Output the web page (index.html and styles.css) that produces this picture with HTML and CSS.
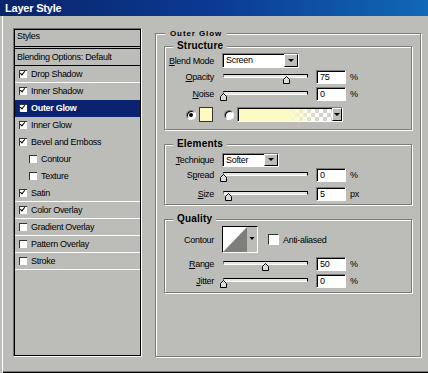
FILE: index.html
```html
<!DOCTYPE html>
<html lang="en">
<head>
  <meta charset="UTF-8" />
  <title>Layer Style</title>
  <link rel="stylesheet" href="styles.css">
</head>
<body>
  <div class="window">
    <div class="title-bar">Layer Style</div>

    <div class="dialog">
      <div class="styles-list">
        <div class="list-head">Styles</div>
        <div class="list-row blend">Blending Options: Default</div>
        <div class="list-row sep"><span class="check on"></span>Drop Shadow</div>
        <div class="list-row"><span class="check on"></span>Inner Shadow</div>
        <div class="list-row selected"><span class="check on"></span>Outer Glow</div>
        <div class="list-row"><span class="check on"></span>Inner Glow</div>
        <div class="list-row"><span class="check on"></span>Bevel and Emboss</div>
        <div class="list-row sub"><span class="check"></span>Contour</div>
        <div class="list-row sub"><span class="check"></span>Texture</div>
        <div class="list-row sep"><span class="check on"></span>Satin</div>
        <div class="list-row sep"><span class="check on"></span>Color Overlay</div>
        <div class="list-row sep"><span class="check"></span>Gradient Overlay</div>
        <div class="list-row sep"><span class="check"></span>Pattern Overlay</div>
        <div class="list-row sep"><span class="check"></span>Stroke</div>
      </div>

      <div class="group glow">
        <span class="group-title small">Outer Glow</span>

        <div class="group sub-group structure">
          <span class="group-title">Structure</span>
          <div class="row first">
            <label><u>B</u>lend Mode</label>
            <div class="select blend-select">
              <span class="select-text">Screen</span>
              <span class="select-btn"></span>
            </div>
          </div>
          <div class="row opacity-row">
            <label><u>O</u>pacity</label>
            <div class="slider">
              <div class="track"></div>
              <svg class="thumb" style="left: 61px" width="7" height="8" viewBox="0 0 7 8"><polygon points="3.5,0.5 6.5,3.5 6.5,7.5 0.5,7.5 0.5,3.5" fill="#dcddd9" stroke="#000"/></svg>
            </div>
            <div class="field">75</div>
            <span class="unit">%</span>
          </div>
          <div class="row noise-row">
            <label><u>N</u>oise</label>
            <div class="slider">
              <div class="track"></div>
              <svg class="thumb" style="left: -2px" width="7" height="8" viewBox="0 0 7 8"><polygon points="3.5,0.5 6.5,3.5 6.5,7.5 0.5,7.5 0.5,3.5" fill="#dcddd9" stroke="#000"/></svg>
            </div>
            <div class="field">0</div>
            <span class="unit">%</span>
          </div>
          <div class="swatch-row">
            <span class="radio on"></span>
            <span class="color-swatch"></span>
            <span class="radio second"></span>
            <div class="gradient">
              <span class="gradient-fill"></span>
              <span class="select-btn narrow"></span>
            </div>
          </div>
        </div>

        <div class="group sub-group elements">
          <span class="group-title">Elements</span>
          <div class="row first">
            <label><u>T</u>echnique</label>
            <div class="select technique-select">
              <span class="select-text">Softer</span>
              <span class="select-btn"></span>
            </div>
          </div>
          <div class="row spread-row">
            <label>S<u>p</u>read</label>
            <div class="slider">
              <div class="track"></div>
              <svg class="thumb" style="left: -2px" width="7" height="8" viewBox="0 0 7 8"><polygon points="3.5,0.5 6.5,3.5 6.5,7.5 0.5,7.5 0.5,3.5" fill="#dcddd9" stroke="#000"/></svg>
            </div>
            <div class="field">0</div>
            <span class="unit">%</span>
          </div>
          <div class="row size-row">
            <label><u>S</u>ize</label>
            <div class="slider">
              <div class="track"></div>
              <svg class="thumb" style="left: 3px" width="7" height="8" viewBox="0 0 7 8"><polygon points="3.5,0.5 6.5,3.5 6.5,7.5 0.5,7.5 0.5,3.5" fill="#dcddd9" stroke="#000"/></svg>
            </div>
            <div class="field">5</div>
            <span class="unit">px</span>
          </div>
        </div>

        <div class="group sub-group quality">
          <span class="group-title">Quality</span>
          <div class="row contour-row">
            <label>Contour</label>
            <div class="contour-wrap">
              <span class="contour">
                <svg width="34" height="25" viewBox="0 0 34 25">
                  <rect width="34" height="25" fill="#fff"/>
                  <polygon points="0,25 24,0 24,25" fill="#7e7f7b"/>
                  <rect x="24" width="10" height="25" fill="#bcbdb9"/>
                  <polygon points="26.5,10 31.5,10 29,13" fill="#000"/>
                </svg>
              </span>
              <span class="box"></span>
              <span class="box-label">Anti-aliased</span>
            </div>
          </div>
          <div class="row range-row">
            <label><u>R</u>ange</label>
            <div class="slider">
              <div class="track"></div>
              <svg class="thumb" style="left: 40px" width="7" height="8" viewBox="0 0 7 8"><polygon points="3.5,0.5 6.5,3.5 6.5,7.5 0.5,7.5 0.5,3.5" fill="#dcddd9" stroke="#000"/></svg>
            </div>
            <div class="field">50</div>
            <span class="unit">%</span>
          </div>
          <div class="row jitter-row">
            <label><u>J</u>itter</label>
            <div class="slider">
              <div class="track"></div>
              <svg class="thumb" style="left: -2px" width="7" height="8" viewBox="0 0 7 8"><polygon points="3.5,0.5 6.5,3.5 6.5,7.5 0.5,7.5 0.5,3.5" fill="#dcddd9" stroke="#000"/></svg>
            </div>
            <div class="field">0</div>
            <span class="unit">%</span>
          </div>
        </div>
      </div>
    </div>
  </div>
</body>
</html>
```

FILE: styles.css
```css
body {
  margin: 0;
  background: #bcbdb9;
  font-family: "Liberation Sans", Arial, sans-serif;
  font-size: 9px;
  letter-spacing: -0.3px;
  color: #000;
  overflow: hidden;
}

.window {
  height: 373px;
  box-shadow: inset 2px 0 0 #bcbdb9, inset 3px 0 0 #fff, inset 0 -1px 0 #000, inset 0 -2px 0 #7c7d7a;
}

.title-bar {
  height: 16px;
  line-height: 16px;
  padding-left: 5px;
  background: linear-gradient(to right, #0a2468, #0b3a94 50%, #1168b6);
  color: #fff;
  font-weight: bold;
  font-size: 11px;
  letter-spacing: -0.2px;
}

.dialog {
  display: flex;
  align-items: flex-start;
  padding: 12px 0 0 13px;
}

/* left list */
.styles-list {
  box-sizing: border-box;
  width: 129px;
  height: 329px;
  padding: 1px;
  border: 1px solid;
  border-color: #6f706d #fff #fff #6f706d;
  box-shadow: inset 1px 1px 0 #000, inset -1px -1px 0 #000;
}

.list-head {
  height: 16px;
  line-height: 12px;
  padding-left: 2px;
  border-bottom: 3px double #000;
}

.list-row {
  display: flex;
  align-items: center;
  height: 16px;
  padding-left: 4px;
  border-bottom: 1px solid transparent;
}

.list-row.blend {
  padding-left: 2px;
  border-bottom-color: #000;
}

.list-row.sep {
  border-bottom-color: #fff;
}

.list-row.sub {
  padding-left: 14px;
}

.list-row.selected {
  background: #0a2270;
  color: #fff;
  font-weight: bold;
}

.check {
  position: relative;
  flex: none;
  box-sizing: border-box;
  width: 8px;
  height: 8px;
  margin-right: 4px;
  background: #fff;
  border-top: 1px solid #333;
  border-left: 1px solid #333;
}

.check.on::after {
  content: "";
  position: absolute;
  left: 1px;
  top: -1px;
  width: 2px;
  height: 4px;
  border: solid #000;
  border-width: 0 1.5px 1.5px 0;
  transform: rotate(40deg);
}

/* group boxes */
.group {
  position: relative;
  box-sizing: border-box;
  border: 1px solid #7c7d7a;
  box-shadow: 1px 1px 0 #fff, inset 1px 1px 0 #fff;
}

.group-title {
  position: absolute;
  top: -7px;
  left: 8px;
  padding: 0 4px;
  background: #bcbdb9;
  font-size: 10px;
  line-height: 12px;
  font-weight: bold;
  letter-spacing: 0.2px;
}

.group-title.small {
  top: -5px;
  left: 9px;
  padding: 0 5px;
  font-size: 8px;
  line-height: 10px;
  letter-spacing: 0.9px;
}

.glow {
  width: 266px;
  height: 324px;
  margin: 5px 0 0 13px;
  padding: 12px 0 0 8px;
}

.sub-group {
  width: 248px;
  margin-bottom: 14px;
}

.structure {
  height: 84px;
  padding-top: 6px;
}

.elements {
  height: 61px;
  padding-top: 7px;
}

.quality {
  height: 74px;
  padding-top: 6px;
}

/* rows */
.row {
  display: grid;
  grid-template-columns: 49px 86px 30px auto;
  column-gap: 8px;
  align-items: center;
  height: 14px;
}

.row label {
  text-align: right;
}

.row.first {
  height: 15px;
}

.opacity-row { margin-top: 2px; }
.noise-row { margin-top: 3px; }
.spread-row { margin-top: 1px; }
.size-row { margin-top: 5px; }
.contour-row { height: 27px; }
.range-row { margin-top: 4px; }
.jitter-row { margin-top: 3px; }

.unit {
  margin-left: -4px;
}

.select {
  display: flex;
  box-sizing: border-box;
  height: 15px;
  background: #fff;
  border: 1px solid;
  border-color: #7c7d7a #fff #fff #7c7d7a;
  box-shadow: inset 1px 1px 0 #000;
}

.blend-select {
  grid-column: span 2;
  width: 77px;
}

.technique-select {
  grid-column: span 2;
  width: 57px;
  height: 14px;
}

.select-text {
  flex: 1;
  padding: 1px 0 0 3px;
  line-height: 11px;
}

.select-btn {
  display: flex;
  align-items: center;
  justify-content: center;
  box-sizing: border-box;
  width: 14px;
  background: #bcbdb9;
  border: 1px solid;
  border-color: #fff #000 #000 #fff;
}

.select-btn::after {
  content: "";
  border-left: 3px solid transparent;
  border-right: 3px solid transparent;
  border-top: 3px solid #000;
}

.select-btn.narrow {
  width: 10px;
}

.field {
  box-sizing: border-box;
  height: 14px;
  padding-left: 3px;
  line-height: 12px;
  background: #fff;
  border: 1px solid;
  border-color: #7c7d7a #fff #fff #7c7d7a;
  box-shadow: inset 1px 1px 0 #000;
}

/* sliders */
.slider {
  position: relative;
  height: 14px;
}

.track {
  box-sizing: border-box;
  height: 4px;
  margin: 4px 0 0 1px;
  background: #e6e6e2;
  border: 1px solid #000;
  border-left-color: #7c7d7a;
  border-bottom-color: #fff;
}

.thumb {
  position: absolute;
  top: 6px;
  display: block;
}

/* colour row */
.swatch-row {
  display: flex;
  align-items: center;
  height: 15px;
  margin-top: 6px;
  padding-left: 21px;
}

.radio {
  display: flex;
  align-items: center;
  justify-content: center;
  box-sizing: border-box;
  width: 10px;
  height: 10px;
  border-radius: 50%;
  background: #fff;
  border: 1px solid;
  border-color: #7c7d7a #fff #fff #7c7d7a;
  box-shadow: inset 1px 1px 0 #000;
}

.radio.on::after {
  content: "";
  width: 4px;
  height: 4px;
  border-radius: 50%;
  background: #000;
}

.radio.second {
  margin-left: 11px;
}

.color-swatch {
  box-sizing: border-box;
  width: 14px;
  height: 15px;
  margin-left: 3px;
  background: #fdfbc2;
  border: 1px solid #333;
}

.gradient {
  display: flex;
  box-sizing: border-box;
  width: 106px;
  height: 15px;
  margin-left: 3px;
  border: 1px solid;
  border-color: #7c7d7a #fff #fff #7c7d7a;
  box-shadow: inset 1px 1px 0 #000;
}

.gradient-fill {
  flex: 1;
  margin: 1px 0 0 1px;
  background: linear-gradient(to right, #fcfbc6 0%, #fcfbc6 55%, rgba(252, 251, 198, 0) 88%),
    repeating-conic-gradient(#d2d2d0 0 25%, #fff 0 50%) 0 0 / 8px 8px;
}

/* contour */
.contour-wrap {
  grid-column: 2 / -1;
  display: flex;
  align-items: center;
}

.contour {
  display: block;
  line-height: 0;
  border: 1px solid;
  border-color: #000 #fff #fff #000;
}

.box {
  box-sizing: border-box;
  width: 11px;
  height: 11px;
  margin-left: 10px;
  background: #fff;
  border: 1px solid;
  border-color: #333 #fff #fff #333;
}

.box-label {
  margin-left: 4px;
}
```
